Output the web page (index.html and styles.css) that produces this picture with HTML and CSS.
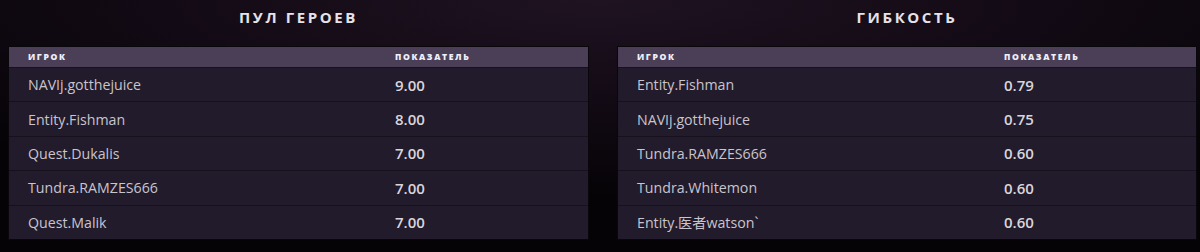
FILE: index.html
```html
<!DOCTYPE html>
<html lang="ru">
<head>
<meta charset="utf-8">
<link rel="stylesheet" href="styles.css">
</head>
<body>
<div class="page">
  <section class="panel">
    <h2 class="title">ПУЛ ГЕРОЕВ</h2>
    <div class="table">
      <div class="row head"><span class="name">ИГРОК</span><span class="val">ПОКАЗАТЕЛЬ</span></div>
      <div class="row"><span class="name">NAVIj.gotthejuice</span><span class="val">9.00</span></div>
      <div class="row"><span class="name">Entity.Fishman</span><span class="val">8.00</span></div>
      <div class="row"><span class="name">Quest.Dukalis</span><span class="val">7.00</span></div>
      <div class="row"><span class="name">Tundra.RAMZES666</span><span class="val">7.00</span></div>
      <div class="row"><span class="name">Quest.Malik</span><span class="val">7.00</span></div>
    </div>
  </section>
  <section class="panel">
    <h2 class="title">ГИБКОСТЬ</h2>
    <div class="table">
      <div class="row head"><span class="name">ИГРОК</span><span class="val">ПОКАЗАТЕЛЬ</span></div>
      <div class="row"><span class="name">Entity.Fishman</span><span class="val">0.79</span></div>
      <div class="row"><span class="name">NAVIj.gotthejuice</span><span class="val">0.75</span></div>
      <div class="row"><span class="name">Tundra.RAMZES666</span><span class="val">0.60</span></div>
      <div class="row"><span class="name">Tundra.Whitemon</span><span class="val">0.60</span></div>
      <div class="row"><span class="name">Entity.医者watson`</span><span class="val">0.60</span></div>
    </div>
  </section>
</div>
</body>
</html>
```
FILE: styles.css
```css
* { box-sizing: border-box; }
html, body { margin: 0; padding: 0; }
body {
  width: 1200px;
  height: 252px;
  overflow: hidden;
  background: radial-gradient(ellipse 900px 200px at 600px 0px, #1f1322 0%, #120a14 50%, #050306 100%);
  font-family: "Open Sans", "Noto Sans", "Noto Sans CJK SC", sans-serif;
}
.page {
  display: flex;
  gap: 30px;
  padding: 0 4px 0 9px;
}
.panel { flex: 0 0 579px; }
.panel + .panel { flex-basis: 578px; }
.title {
  margin: 0;
  height: 47px;
  padding-top: 7px;
  text-align: center;
  font-size: 15px;
  font-weight: 700;
  letter-spacing: 2.6px;
  color: #e6e2ea;
  line-height: 20px;
}
.table {
  background: #221b2b;
  box-shadow: 0 0 0 1px #0a070c;
}
.row {
  display: flex;
  align-items: center;
  height: 34.4px;
  border-top: 1px solid #16111c;
  color: #c9c4cd;
  font-size: 14.2px;
}
.row.head {
  height: 20px;
  border-top: 0;
  background: #4b3f58;
  color: #eef0fa;
  font-size: 8.6px;
  font-weight: 800;
  letter-spacing: 1.6px;
}
.name { flex: 0 0 386px; padding-left: 19px; }
.val { font-weight: 600; font-size: 15px; color: #d9d5dd; }
.row.head .val { font-size: 8.6px; font-weight: 800; color: #eef0fa; }
```
